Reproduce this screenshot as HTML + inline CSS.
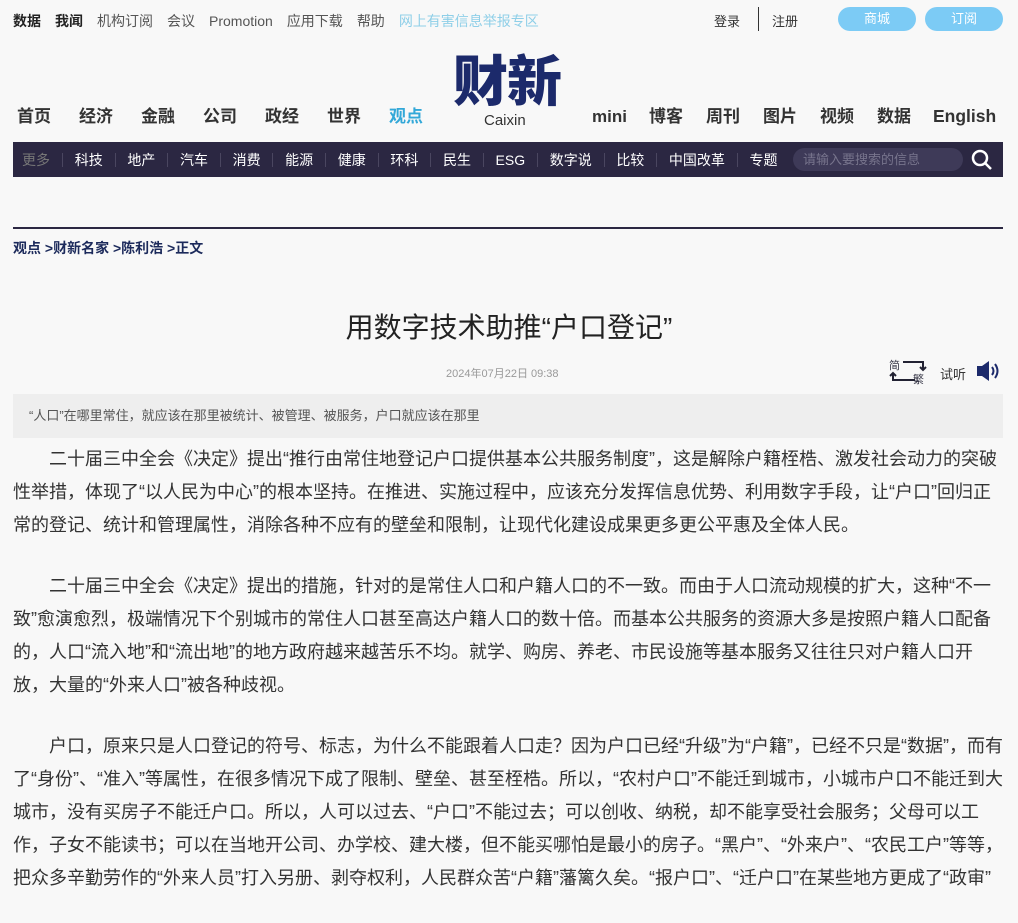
<!DOCTYPE html>
<html><head><meta charset="utf-8"><style>
body{margin:0;background:#f8f8f8;font-family:"Liberation Sans","Noto Sans CJK SC",sans-serif;color:#333;width:1018px;height:902px;overflow:hidden;position:relative}
.a{position:absolute;white-space:nowrap}
.top span{margin-right:14px;font-size:14px;color:#555}
.main span{font-size:17px;font-weight:bold;color:#333;margin-right:0}
.nav{position:absolute;left:13px;top:142px;width:990px;height:35px;background:#2b2742}
.nav span{font-size:14px;color:#fff;display:inline-block;padding:0 11.8px;border-right:1px solid #4a4660;line-height:14px}
p{margin:0 0 28px 0;text-indent:2em;font-size:18px;line-height:33px;color:#333}
</style></head><body>
<div class="a top" style="left:13px;top:11px"><span style="color:#222;font-weight:bold">数据</span><span style="color:#222;font-weight:bold">我闻</span><span>机构订阅</span><span>会议</span><span>Promotion</span><span>应用下载</span><span>帮助</span><span style="color:#8fcfe8">网上有害信息举报专区</span></div>
<div class="a" style="left:714px;top:11px;font-size:13px;color:#333">登录</div>
<div class="a" style="left:758px;top:7px;width:1px;height:24px;background:#333"></div>
<div class="a" style="left:772px;top:11px;font-size:13px;color:#333">注册</div>
<div class="a" style="left:838px;top:7px;width:78px;height:24px;border-radius:12px;background:#7ccbf5;color:#fff;font-size:13px;text-align:center;line-height:24px">商城</div>
<div class="a" style="left:925px;top:7px;width:78px;height:24px;border-radius:12px;background:#7ccbf5;color:#fff;font-size:13px;text-align:center;line-height:24px">订阅</div>
<div class="a" style="left:453px;top:52px;font-size:55px;font-weight:900;color:#1c2a6b;letter-spacing:-1px;line-height:60px">财新</div>
<div class="a" style="left:484px;top:112px;font-size:15px;color:#333">Caixin</div>
<div class="a main" style="left:17px;top:102px"><span>首页</span><span style="margin-left:28px">经济</span><span style="margin-left:28px">金融</span><span style="margin-left:28px">公司</span><span style="margin-left:28px">政经</span><span style="margin-left:28px">世界</span><span style="margin-left:28px;color:#33a8d8">观点</span></div>
<div class="a main" style="left:592px;top:102px"><span>mini</span><span style="margin-left:22px">博客</span><span style="margin-left:23px">周刊</span><span style="margin-left:23px">图片</span><span style="margin-left:23px">视频</span><span style="margin-left:23px">数据</span><span style="margin-left:22px;font-size:17.5px">English</span></div>
<div class="nav"><div style="position:absolute;left:0;top:10px;white-space:nowrap"><span style="color:#777;padding-left:9px;padding-right:12px">更多</span><span>科技</span><span>地产</span><span>汽车</span><span>消费</span><span>能源</span><span>健康</span><span>环科</span><span>民生</span><span>ESG</span><span>数字说</span><span>比较</span><span>中国改革</span><span style="border:0">专题</span></div>
<div style="position:absolute;left:780px;top:6px;width:170px;height:23px;border-radius:12px;background:#3e3a58;color:#77748c;font-size:13px;line-height:23px;padding-left:10px;box-sizing:border-box">请输入要搜索的信息</div>
<svg style="position:absolute;left:958px;top:7px" width="22" height="22"><circle cx="9" cy="9" r="7" fill="none" stroke="#fff" stroke-width="2.5"/><line x1="14" y1="14" x2="20" y2="20" stroke="#fff" stroke-width="2.5"/></svg></div>
<div class="a" style="left:13px;top:227px;width:990px;height:2px;background:#2b2742"></div>
<div class="a" style="left:13px;top:238px;font-size:14px;font-weight:bold;color:#1c2a5b">观点 &gt;财新名家 &gt;陈利浩 &gt;正文</div>
<div class="a" style="left:0;width:1018px;top:306px;text-align:center;font-size:28px;color:#222">用数字技术助推“户口登记”</div>
<div class="a" style="left:446px;top:365px;font-size:11px;color:#999">2024年07月22日 09:38</div>
<div class="a" style="left:889px;top:357px;font-size:11px;color:#334">简</div>
<div class="a" style="left:913px;top:371px;font-size:11px;color:#334">繁</div>
<svg class="a" style="left:889px;top:358px" width="40" height="28"><path d="M14 4H34V12M31 9l3 3 3-3M26 22H4V15M1 18l3-3 3 3" fill="none" stroke="#223" stroke-width="2"/></svg>
<div class="a" style="left:940px;top:364px;font-size:13px;color:#333">试听</div>
<svg class="a" style="left:975px;top:360px" width="26" height="22"><path d="M2 6h5l7-5v20l-7-5H2z" fill="#1c2a6b"/><path d="M17 7q3 4 0 8M20 4q5 7 0 14" fill="none" stroke="#1c2a6b" stroke-width="2"/></svg>
<div class="a" style="left:13px;top:394px;width:990px;height:44px;background:#eeeeee;font-size:13px;color:#555;line-height:44px;padding-left:16px;box-sizing:border-box">“人口”在哪里常住，就应该在那里被统计、被管理、被服务，户口就应该在那里</div>
<div class="a" style="left:13px;top:443px;width:992px;white-space:normal">
<p>二十届三中全会《决定》提出“推行由常住地登记户口提供基本公共服务制度”，这是解除户籍桎梏、激发社会动力的突破性举措，体现了“以人民为中心”的根本坚持。在推进、实施过程中，应该充分发挥信息优势、利用数字手段，让“户口”回归正常的登记、统计和管理属性，消除各种不应有的壁垒和限制，让现代化建设成果更多更公平惠及全体人民。</p>
<p>二十届三中全会《决定》提出的措施，针对的是常住人口和户籍人口的不一致。而由于人口流动规模的扩大，这种“不一致”愈演愈烈，极端情况下个别城市的常住人口甚至高达户籍人口的数十倍。而基本公共服务的资源大多是按照户籍人口配备的，人口“流入地”和“流出地”的地方政府越来越苦乐不均。就学、购房、养老、市民设施等基本服务又往往只对户籍人口开放，大量的“外来人口”被各种歧视。</p>
<p>户口，原来只是人口登记的符号、标志，为什么不能跟着人口走？因为户口已经“升级”为“户籍”，已经不只是“数据”，而有了“身份”、“准入”等属性，在很多情况下成了限制、壁垒、甚至桎梏。所以，“农村户口”不能迁到城市，小城市户口不能迁到大城市，没有买房子不能迁户口。所以，人可以过去、“户口”不能过去；可以创收、纳税，却不能享受社会服务；父母可以工作，子女不能读书；可以在当地开公司、办学校、建大楼，但不能买哪怕是最小的房子。“黑户”、“外来户”、“农民工户”等等，把众多辛勤劳作的“外来人员”打入另册、剥夺权利，人民群众苦“户籍”藩篱久矣。“报户口”、“迁户口”在某些地方更成了“政审”</p>
</div>
</body></html>
